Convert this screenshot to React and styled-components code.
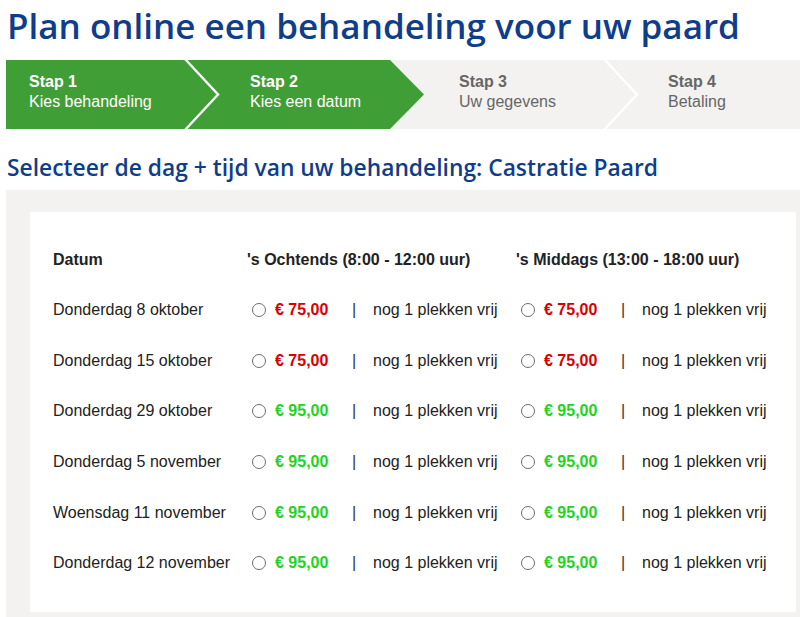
import React from "react";
import styled, { createGlobalStyle } from "styled-components";

const Global = createGlobalStyle`
  html, body { margin: 0; padding: 0; background: #fff; overflow: hidden; }
  body { font-family: "Liberation Sans", Arial, sans-serif; color: #222; }
`;

const Page = styled.div`
  width: 800px;
  height: 617px;
  overflow: hidden;
  display: flex;
  flex-direction: column;
  & > * { flex: none; }
`;

const Title = styled.h1`
  margin: 0;
  padding: 0 0 0 7px;
  height: 60px;
  line-height: 52px;
  font-family: "Open Sans", "Noto Sans", sans-serif;
  font-weight: 600;
  font-size: 35px;
  color: #0f3d8a;
  white-space: nowrap;
`;

const StepBar = styled.div`
  display: flex;
  height: 69px;
  margin-left: 6px;
  background: #f3f2f1;
`;

const Step = styled.div`
  position: relative;
  width: ${(p) => p.$w}px;
  flex: none;
  box-sizing: border-box;
  padding: 12px 0 0 ${(p) => p.$pad}px;
  background: ${(p) => (p.$done ? "#3f9e36" : "transparent")};
  color: ${(p) => (p.$done ? "#fff" : "#666")};
  font-size: 16px;
  line-height: 20px;
  z-index: ${(p) => p.$z};
`;

const StepLabel = styled.div`
  font-weight: 700;
`;

const StepOverlay = styled.svg`
  position: absolute;
  top: 0;
  left: 100%;
  width: 36px;
  height: 69px;
  overflow: visible;
`;

const SubTitle = styled.h2`
  margin: 0;
  padding: 0 0 0 7px;
  height: 61px;
  line-height: 78px;
  font-family: "Open Sans", "Noto Sans", sans-serif;
  font-weight: 600;
  font-size: 22.8px;
  color: #0f3d8a;
  white-space: nowrap;
`;

const Panel = styled.div`
  margin-left: 6px;
  background: #f3f2f1;
  padding: 22px 4px 20px 24px;
`;

const Card = styled.div`
  background: #fff;
  padding: 23px 0 23px 23px;
`;

const Row = styled.div`
  display: grid;
  grid-template-columns: 194px 269px 269px;
  align-items: center;
  height: ${(p) => (p.$head ? "50px" : "50.6px")};
  font-size: 16px;
  font-weight: ${(p) => (p.$head ? 700 : 400)};
  color: #222;
  white-space: nowrap;
`;

const Slot = styled.div`
  display: grid;
  grid-template-columns: 28px 77px 21px auto;
  align-items: center;
`;

const Radio = styled.input.attrs({ type: "radio" })`
  appearance: none;
  -webkit-appearance: none;
  margin: 0 0 0 5px;
  width: 14px;
  height: 14px;
  border: 1px solid #6d6d6d;
  border-radius: 50%;
  box-sizing: border-box;
  background: #fff;
`;

const Price = styled.span`
  font-weight: 700;
  color: ${(p) => (p.$cheap ? "#d90000" : "#22d422")};
`;

const Pipe = styled.span`
  color: #333;
`;

const steps = [
  { label: "Stap 1", text: "Kies behandeling", done: true, w: 179, pad: 23, overlay: "line" },
  { label: "Stap 2", text: "Kies een datum", done: true, w: 205, pad: 65, overlay: "tip" },
  { label: "Stap 3", text: "Uw gegevens", done: false, w: 214, pad: 69, overlay: "line" },
  { label: "Stap 4", text: "Betaling", done: false, w: 196, pad: 64, overlay: null },
];

const rows = [
  { date: "Donderdag 8 oktober", price: "€ 75,00", cheap: true },
  { date: "Donderdag 15 oktober", price: "€ 75,00", cheap: true },
  { date: "Donderdag 29 oktober", price: "€ 95,00", cheap: false },
  { date: "Donderdag 5 november", price: "€ 95,00", cheap: false },
  { date: "Woensdag 11 november", price: "€ 95,00", cheap: false },
  { date: "Donderdag 12 november", price: "€ 95,00", cheap: false },
];

function Overlay({ kind }) {
  if (kind === "tip") {
    return (
      <StepOverlay viewBox="0 0 36 69">
        <polygon points="0,0 34,34.5 0,69" fill="#3f9e36" />
      </StepOverlay>
    );
  }
  return (
    <StepOverlay viewBox="0 0 36 69">
      <polyline points="0,-1 33,34.5 0,70" fill="none" stroke="#fff" strokeWidth="2.4" />
    </StepOverlay>
  );
}

function SlotCell({ r, name }) {
  return (
    <Slot>
      <Radio name={name} />
      <Price $cheap={r.cheap}>{r.price}</Price>
      <Pipe>|</Pipe>
      <span>nog 1 plekken vrij</span>
    </Slot>
  );
}

export default function App() {
  return (
    <Page>
      <Global />
      <Title>Plan online een behandeling voor uw paard</Title>
      <StepBar>
        {steps.map((s, i) => (
          <Step key={s.label} $w={s.w} $pad={s.pad} $done={s.done} $z={10 - i}>
            <StepLabel>{s.label}</StepLabel>
            <div>{s.text}</div>
            {s.overlay && <Overlay kind={s.overlay} />}
          </Step>
        ))}
      </StepBar>
      <SubTitle>Selecteer de dag + tijd van uw behandeling: Castratie Paard</SubTitle>
      <Panel>
        <Card>
          <Row $head>
            <span>Datum</span>
            <span>'s Ochtends (8:00 - 12:00 uur)</span>
            <span>'s Middags (13:00 - 18:00 uur)</span>
          </Row>
          {rows.map((r, i) => (
            <Row key={r.date}>
              <span>{r.date}</span>
              <SlotCell r={r} name={`am${i}`} />
              <SlotCell r={r} name={`pm${i}`} />
            </Row>
          ))}
        </Card>
      </Panel>
    </Page>
  );
}
